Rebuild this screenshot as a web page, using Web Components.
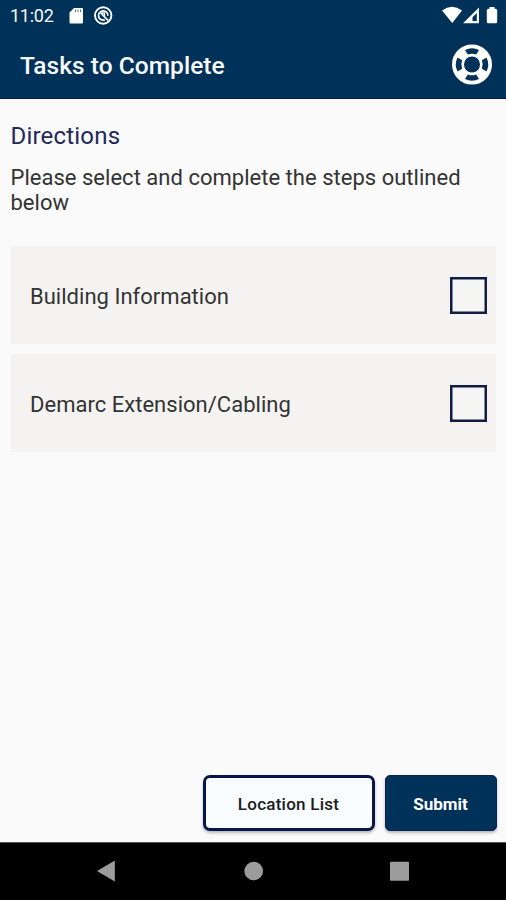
<!DOCTYPE html>
<html lang="en">
<head>
<meta charset="utf-8">
<title>Tasks to Complete</title>
<style>
html,body{margin:0;height:100%}
body{font-family:Roboto,"Liberation Sans",sans-serif;background:#fafafa;color:#1c1c1e;overflow:hidden}
</style>
</head>
<body>
<task-screen></task-screen>
<script>
const define = (name, html) => {
  const template = document.createElement('template');
  template.innerHTML = html;
  customElements.define(name, class extends HTMLElement {
    constructor() {
      super();
      this.attachShadow({ mode: 'open' }).append(template.content.cloneNode(true));
    }
  });
};

define('status-bar', `
<style>
:host{display:flex;align-items:center;height:32px;padding:0 8px 0 10px;box-sizing:border-box;color:#f6f8fc;font-size:18px}
.time{line-height:32px;letter-spacing:-.25px;width:59px;flex:none}
svg{display:block;flex:none}
.right{margin-left:auto}
</style>
<span class="time">11:02</span>
<svg width="46" height="32" viewBox="69 0 46 32">
  <path d="M74 8h8q1 0 1 1v13.500q0 1-1 1H70.500q-1 0-1-1V12.500z" fill="#fff"/>
  <path d="M75.500 9.500v2.500M78 9.500v2.500M80.500 9.500v2.500" stroke="#003158" stroke-opacity=".7" stroke-width="1"/>
  <circle cx="103.200" cy="15.500" r="8.200" fill="none" stroke="#fff" stroke-width="1.900"/>
  <path d="M104.800 19.900A4.700 4.700 0 1 1 107.900 15.700M100.800 13l7.400 7.600" fill="none" stroke="#fff" stroke-width="1.700"/>
  <path d="M101.500 13h3v3.500" fill="none" stroke="#fff" stroke-width="1.300"/>
</svg>
<svg class="right" width="58" height="32" viewBox="440 0 58 32" fill="#fff">
  <path d="M442 10.500Q452 3.200 462 10.500L452.300 23z"/>
  <path fill-rule="evenodd" d="M479 7.500V23.300H463zM476.800 13v8h-4.300v-3.700z"/>
  <path d="M489.500 7h5v1.700h1q1.700 0 1.700 1.500v11.600q0 1.500-1.500 1.500h-7.400q-1.500 0-1.500-1.500V10.200q0-1.500 1.700-1.500h1z"/>
</svg>`);

define('help-icon', `
<style>:host{display:block;width:42px;height:42px}svg{display:block}</style>
<svg width="42" height="42" viewBox="-21 -20.500 42 42">
  <circle r="14" fill="none" stroke="#fff" stroke-width="12"/>
  <g fill="#003158">
    <path d="M-7-14.500Q0-18 7-14.500L4.200-9.900Q0-11.600-4.200-9.900z"/>
    <path d="M-7-14.500Q0-18 7-14.500L4.200-9.900Q0-11.600-4.200-9.900z" transform="rotate(90)"/>
    <path d="M-7-14.500Q0-18 7-14.500L4.200-9.900Q0-11.600-4.200-9.900z" transform="rotate(180)"/>
    <path d="M-7-14.500Q0-18 7-14.500L4.200-9.900Q0-11.600-4.200-9.900z" transform="rotate(270)"/>
  </g>
</svg>`);

define('app-bar', `
<style>
:host{display:block;height:98.500px;background:#003158;box-sizing:border-box;border-bottom:1px solid #08194a}
.bar{display:flex;align-items:center;justify-content:space-between;height:65px;padding:0 13px 0 20px}
h1{margin:0;font-size:24.500px;font-weight:500;line-height:32px;color:#f8f9fd;letter-spacing:.03px;padding-top:2px}
</style>
<status-bar></status-bar>
<div class="bar"><h1><slot></slot></h1><help-icon></help-icon></div>`);

define('screen-directions', `
<style>
:host{display:block;padding:23px 11px 0 10.500px}
h2{margin:0;font-size:24px;font-weight:400;line-height:28px;color:#22285a;letter-spacing:.2px}
p{margin:15px 0 0;font-size:22px;font-weight:400;line-height:25px;letter-spacing:.02px;color:#333}
</style>
<h2><slot name="title"></slot></h2><p><slot></slot></p>`);

define('task-row', `
<style>
:host{display:flex;align-items:center;justify-content:space-between;height:98px;box-sizing:border-box;padding:0 9px 0 19px;background:#f4f3f1;font-size:22px;font-weight:400;color:#333}
.label{letter-spacing:.02px;padding-top:3px}
svg{display:block}
</style>
<span class="label"><slot></slot></span>
<svg width="37" height="37"><rect x="1.250" y="1.250" width="34.500" height="34.500" fill="#f5f5f4" stroke="#101c42" stroke-width="2.500"/></svg>`);

define('action-button', `
<style>
:host{display:flex;align-items:center;justify-content:center;box-sizing:border-box;height:56px;width:112px;border-radius:5px;background:#003158;border:1px solid #072453;color:#fff;font-size:17px;font-weight:700;box-shadow:0 2px 3px #0004;padding:1px 1px 0 0}
:host([outlined]){width:172px;background:#f8fcff;border:3px solid #07174a;border-radius:7px;color:#1b1b20;font-weight:500;letter-spacing:.25px}
</style><span><slot></slot></span>`);

define('navigation-bar', `
<style>:host{display:block;height:58px;background:#000;box-sizing:border-box;border-top:1px solid #555}svg{display:block}</style>
<svg width="506" height="57" viewBox="0 843 506 57" fill="#9c9c9c">
  <path d="M97 871L114.800 860.500V881.500z"/>
  <circle cx="253.700" cy="871" r="9.300"/>
  <rect x="390" y="861.700" width="19" height="19" rx="1"/>
</svg>`);

define('task-screen', `
<style>
:host{display:flex;flex-direction:column;width:506px;height:900px}
.tasks{display:grid;gap:10px;padding:31.500px 10px 0 11px}
.actions{display:flex;justify-content:flex-end;gap:10px;margin-top:auto;padding:0 9px 11px}
</style>
<app-bar>Tasks to Complete</app-bar>
<screen-directions><span slot="title">Directions</span>Please select and complete the steps outlined below</screen-directions>
<div class="tasks"><task-row>Building Information</task-row><task-row>Demarc Extension/Cabling</task-row></div>
<div class="actions"><action-button outlined>Location List</action-button><action-button>Submit</action-button></div>
<navigation-bar></navigation-bar>`);
</script>
</body>
</html>
